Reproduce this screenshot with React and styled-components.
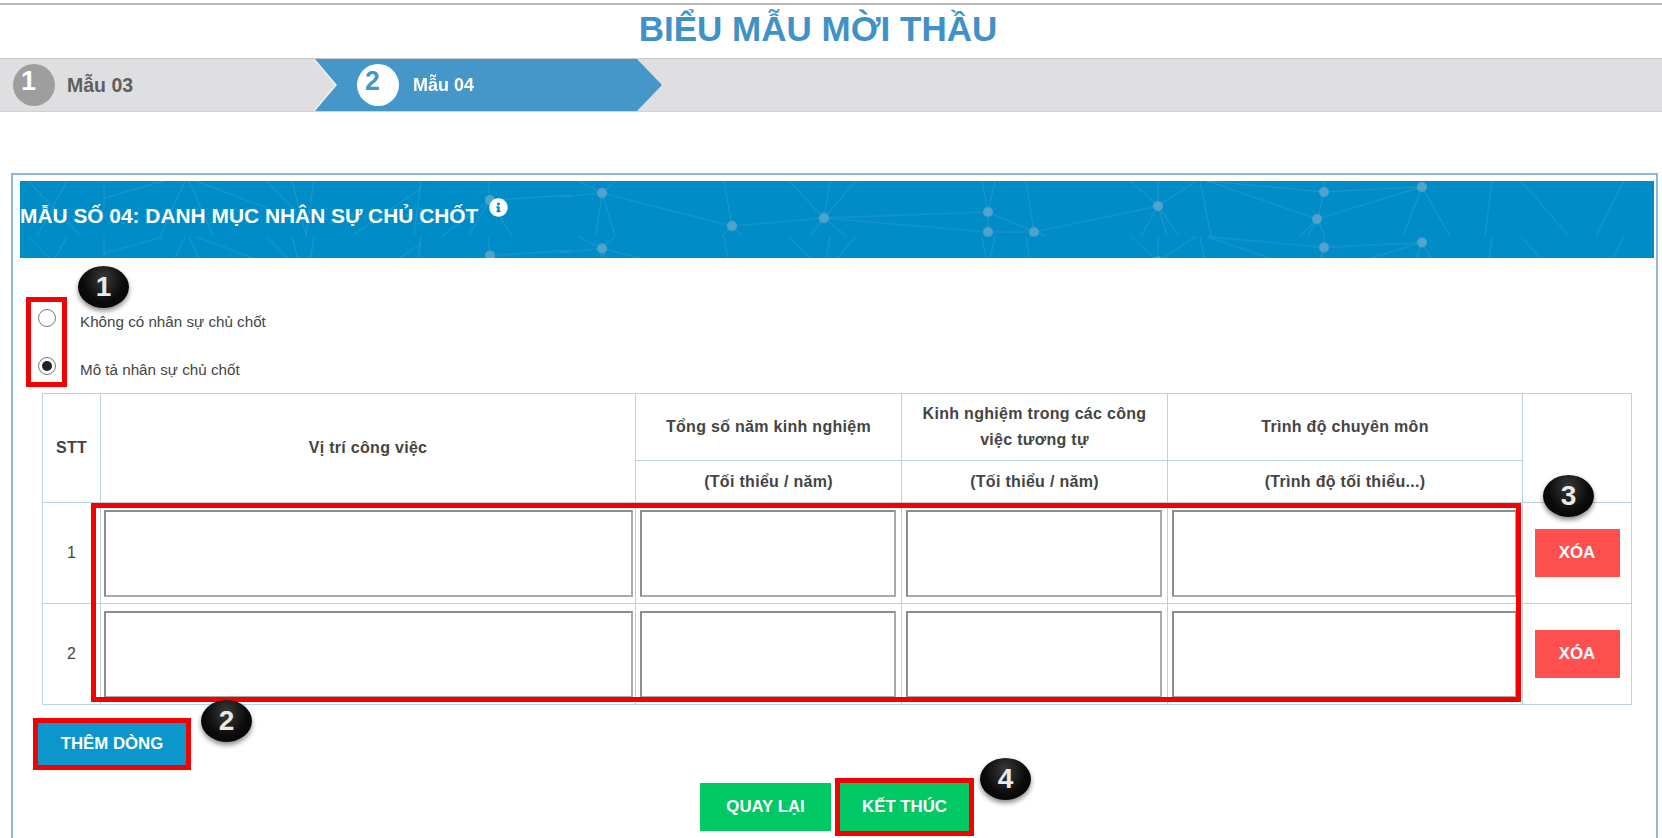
import React from "react";
import styled, { createGlobalStyle } from "styled-components";
import { FaInfoCircle } from "react-icons/fa";

const GlobalStyle = createGlobalStyle`
  html, body {
    margin: 0;
    padding: 0;
    background: #fff;
    overflow: hidden;
  }
  body {
    font-family: "Liberation Sans", Arial, sans-serif;
    color: #444;
  }
`;

const Page = styled.div`
  position: relative;
  width: 1662px;
  height: 838px;
  overflow: hidden;
  padding-top: 3px;
  box-sizing: border-box;
`;

const PageTitle = styled.h1`
  margin: 0;
  height: 55px;
  padding-right: 26px;
  border-top: 2px solid #b8b8b8;
  box-sizing: border-box;
  text-align: center;
  color: #4191c9;
  font-size: 35px;
  font-weight: 700;
  line-height: 48px;
`;

const Stepper = styled.div`
  display: flex;
  height: 54px;
  background: #dfdfe2;
  border-top: 1px solid #c9c9c9;
  border-bottom: 1px solid #d2d2d4;
  box-sizing: border-box;
`;

const GrayStep = styled.div`
  display: flex;
  align-items: center;
  width: 315px;
  padding-left: 13px;
  box-sizing: border-box;
`;

const ActiveWrap = styled.div`
  width: 347px;
  filter: drop-shadow(-1.5px 0 0 #eeeef0);
`;

const ActiveStep = styled.div`
  display: flex;
  align-items: center;
  height: 100%;
  padding-left: 42px;
  box-sizing: border-box;
  background: #4596c9;
  clip-path: polygon(0 0, 322px 0, 347px 50%, 322px 100%, 0 100%, 22px 50%);
`;

const StepCircle = styled.span`
  display: flex;
  flex: 0 0 42px;
  height: 42px;
  padding: 0 0 7px 8px;
  box-sizing: border-box;
  align-items: center;
  border-radius: 50%;
  background: ${(p) => (p.$active ? "#fff" : "#9e9e9e")};
  color: ${(p) => (p.$active ? "#4596c9" : "#fff")};
  font-size: 27px;
  font-weight: 700;
`;

const StepLabel = styled.span`
  margin-left: ${(p) => (p.$active ? "14px" : "12px")};
  color: ${(p) => (p.$active ? "#fff" : "#5f5f5f")};
  font-size: ${(p) => (p.$active ? "18px" : "19.5px")};
  font-weight: 700;
`;

const Panel = styled.section`
  margin: 61px 4px 0 11px;
  padding: 6px 2px 60px 7px;
  border: 2px solid #8fb8da;
`;

const Banner = styled.div`
  position: relative;
  display: flex;
  align-items: center;
  height: 77px;
  padding-bottom: 8px;
  box-sizing: border-box;
  background: #008cc6;
  overflow: hidden;
`;

const BannerArt = styled.svg`
  position: absolute;
  left: 0;
  top: 0;
  width: 100%;
  height: 100%;
`;

const BannerTitle = styled.h2`
  position: relative;
  margin: 0;
  color: #fff;
  font-size: 20.9px;
  font-weight: 700;
`;

const InfoIcon = styled(FaInfoCircle)`
  position: relative;
  margin: -16px 0 0 11px;
  color: #fff;
  font-size: 19px;
`;

const Options = styled.div`
  margin: 36px 0 3px 18px;
`;

const OptionRow = styled.label`
  display: flex;
  align-items: center;
  height: 48px;
  font-size: 15.2px;
  color: #444;
`;

const Radio = styled.input`
  appearance: none;
  position: relative;
  width: 18px;
  height: 18px;
  margin: 0;
  border: 1px solid #777;
  border-radius: 50%;
  background: #fff;

  &:checked::after {
    content: "";
    position: absolute;
    inset: 3px;
    border-radius: 50%;
    background: #222;
  }
`;

const OptionText = styled.span`
  margin-left: 24px;
  padding-top: 6px;
`;

const Table = styled.table`
  width: 1589px;
  margin-left: 22px;
  border-collapse: collapse;
  table-layout: fixed;
`;

const HeadCell = styled.th`
  padding: 0 8px;
  border: 1px solid #bcd0dd;
  color: #444;
  font-size: 16px;
  font-weight: 700;
  line-height: 26px;
  letter-spacing: 0.3px;
  height: ${(p) => p.$h || "auto"};
`;

const BodyCell = styled.td`
  padding: ${(p) => p.$pad || "7px 5px 6px 4px"};
  border: 1px solid #bcd0dd;
  text-align: center;
  font-size: 16px;
  color: #444;
`;

const Field = styled.textarea`
  display: block;
  width: 100%;
  height: 87px;
  padding: 2px;
  box-sizing: border-box;
  border: 2px solid;
  border-color: #8d8d8d #a9a9a9 #a9a9a9 #8d8d8d;
  background: #fff;
  resize: none;
`;

const Button = styled.button`
  display: ${(p) => (p.$block ? "block" : "inline-block")};
  width: ${(p) => p.$w};
  height: ${(p) => p.$h || "48px"};
  padding: 0;
  border: 0;
  background: ${(p) => p.$bg};
  color: #fff;
  font-family: inherit;
  font-size: 16.8px;
  font-weight: 700;
  outline: ${(p) => (p.$marked ? "5px solid #f40000" : "none")};
`;

const AddRow = styled.div`
  margin: 18px 0 0 18px;
`;

const Actions = styled.div`
  display: flex;
  justify-content: center;
  gap: 9px;
  margin-top: 18px;
  padding-right: 5px;
`;

const RedFrame = styled.div`
  position: absolute;
  left: ${(p) => p.$x}px;
  top: ${(p) => p.$y}px;
  width: ${(p) => p.$w}px;
  height: ${(p) => p.$h}px;
  border: 5px solid #f40000;
  box-sizing: border-box;
  pointer-events: none;
`;

const Badge = styled.div`
  position: absolute;
  left: ${(p) => p.$x}px;
  top: ${(p) => p.$y}px;
  display: flex;
  align-items: center;
  justify-content: center;
  width: 51px;
  height: 42px;
  border-radius: 50%;
  background: radial-gradient(ellipse at 50% 30%, #3a3a3a 0%, #0c0c0c 55%, #000 100%);
  box-shadow: 0 3px 5px rgba(0, 0, 0, 0.45);
  color: #e9e9e9;
  font-size: 28px;
  font-weight: 700;
`;

const TILE_LINES = [
  [28, 0, 81, 55], [67, 0, 37, 55], [104, 0, 104, 27], [104, 17, 164, 0], [185, 0, 160, 55],
  [189, 0, 213, 55], [196, 0, 267, 27], [267, 0, 296, 31], [292, 0, 306, 54], [314, 0, 306, 54],
  [421, 0, 414, 54], [353, 54, 421, 7], [488, 0, 490, 19], [490, 19, 469, 54], [490, 19, 512, 55],
  [490, 19, 570, 14], [442, 55, 490, 19], [578, 0, 602, 12], [615, 0, 602, 12], [560, 16, 602, 12],
  [602, 12, 732, 45], [602, 12, 596, 55], [602, 12, 615, 55], [732, 45, 724, 0], [732, 45, 722, 55],
  [732, 45, 742, 55], [732, 45, 824, 37], [824, 37, 789, 0], [824, 37, 830, 0], [824, 37, 856, 0],
  [824, 37, 810, 55], [824, 37, 846, 55], [824, 37, 988, 31], [824, 37, 988, 51], [988, 31, 982, 0],
  [988, 31, 995, 0], [988, 31, 988, 51], [988, 31, 1034, 51], [988, 51, 1034, 51], [1034, 51, 1026, 0],
  [1034, 51, 1158, 25], [1034, 51, 1046, 55], [1158, 25, 1131, 0], [1158, 25, 1158, 0], [1158, 25, 1141, 55],
  [1158, 25, 1179, 55], [1158, 25, 1167, 55], [1158, 25, 1196, 0], [1200, 0, 1211, 55], [1207, 0, 1317, 38],
  [1207, 0, 1324, 11], [1324, 11, 1422, 6], [1324, 11, 1317, 38], [1324, 11, 1324, 0], [1317, 38, 1422, 6],
  [1317, 38, 1300, 55], [1317, 38, 1308, 55], [1317, 38, 1325, 55], [1422, 6, 1403, 55], [1422, 6, 1450, 55],
  [1492, 0, 1485, 55], [1521, 0, 1569, 55], [1624, 0, 1596, 55],
];

const TILE_NODES = [
  [490, 19], [602, 12], [732, 45], [824, 37], [988, 31], [988, 51],
  [1034, 51], [1158, 25], [1324, 11], [1317, 38], [1422, 6],
];

function BannerPattern() {
  return (
    <BannerArt aria-hidden="true">
      <defs>
        <pattern id="network" width="1700" height="55.5" patternUnits="userSpaceOnUse">
          <g transform="translate(-20 0)">
            {TILE_LINES.map(([x1, y1, x2, y2], i) => (
              <line key={i} x1={x1} y1={y1} x2={x2} y2={y2} stroke="#4aa9d3" strokeOpacity="0.4" strokeWidth="1" />
            ))}
            {TILE_NODES.map(([x, y], i) => (
              <circle key={i} cx={x} cy={y} r="5" fill="#4fa3cd" />
            ))}
          </g>
        </pattern>
      </defs>
      <rect width="100%" height="100%" fill="url(#network)" />
    </BannerArt>
  );
}

function PersonRow({ index }) {
  return (
    <tr>
      <BodyCell $pad="0">{index}</BodyCell>
      <BodyCell $pad="7px 2px 6px 3px">
        <Field />
      </BodyCell>
      <BodyCell>
        <Field />
      </BodyCell>
      <BodyCell>
        <Field />
      </BodyCell>
      <BodyCell>
        <Field />
      </BodyCell>
      <BodyCell $pad="0">
        <Button $w="85px" $bg="#ff5050">
          XÓA
        </Button>
      </BodyCell>
    </tr>
  );
}

export default function App() {
  return (
    <Page>
      <GlobalStyle />
      <PageTitle>BIỂU MẪU MỜI THẦU</PageTitle>
      <Stepper>
        <GrayStep>
          <StepCircle>1</StepCircle>
          <StepLabel>Mẫu 03</StepLabel>
        </GrayStep>
        <ActiveWrap>
          <ActiveStep>
            <StepCircle $active>2</StepCircle>
            <StepLabel $active>Mẫu 04</StepLabel>
          </ActiveStep>
        </ActiveWrap>
      </Stepper>

      <Panel>
        <Banner>
          <BannerPattern />
          <BannerTitle>MẪU SỐ 04: DANH MỤC NHÂN SỰ CHỦ CHỐT</BannerTitle>
          <InfoIcon />
        </Banner>

        <Options>
          <OptionRow>
            <Radio type="radio" name="staff" />
            <OptionText>Không có nhân sự chủ chốt</OptionText>
          </OptionRow>
          <OptionRow>
            <Radio type="radio" name="staff" defaultChecked />
            <OptionText>Mô tả nhân sự chủ chốt</OptionText>
          </OptionRow>
        </Options>

        <Table>
          <colgroup>
            <col width="58" />
            <col width="535" />
            <col width="266" />
            <col width="266" />
            <col width="355" />
            <col width="109" />
          </colgroup>
          <thead>
            <tr>
              <HeadCell rowSpan={2}>STT</HeadCell>
              <HeadCell rowSpan={2}>Vị trí công việc</HeadCell>
              <HeadCell $h="66px">Tổng số năm kinh nghiệm</HeadCell>
              <HeadCell $h="66px">Kinh nghiệm trong các công việc tương tự</HeadCell>
              <HeadCell $h="66px">Trình độ chuyên môn</HeadCell>
              <HeadCell rowSpan={2} />
            </tr>
            <tr>
              <HeadCell $h="41px">(Tối thiểu / năm)</HeadCell>
              <HeadCell $h="41px">(Tối thiểu / năm)</HeadCell>
              <HeadCell $h="41px">(Trình độ tối thiểu...)</HeadCell>
            </tr>
          </thead>
          <tbody>
            <PersonRow index={1} />
            <PersonRow index={2} />
          </tbody>
        </Table>

        <AddRow>
          <Button $block $marked $w="148px" $h="42px" $bg="#0b96cc">
            THÊM DÒNG
          </Button>
        </AddRow>

        <Actions>
          <Button $w="131px" $bg="#00c864">
            QUAY LẠI
          </Button>
          <Button $marked $w="129px" $bg="#00c864">
            KẾT THÚC
          </Button>
        </Actions>
      </Panel>

      <RedFrame $x={26} $y={297} $w={41} $h={90} />
      <RedFrame $x={91} $y={503} $w={1430} $h={199} />

      <Badge $x={78} $y={266}>1</Badge>
      <Badge $x={201} $y={700}>2</Badge>
      <Badge $x={1543} $y={475}>3</Badge>
      <Badge $x={980} $y={758}>4</Badge>
    </Page>
  );
}
